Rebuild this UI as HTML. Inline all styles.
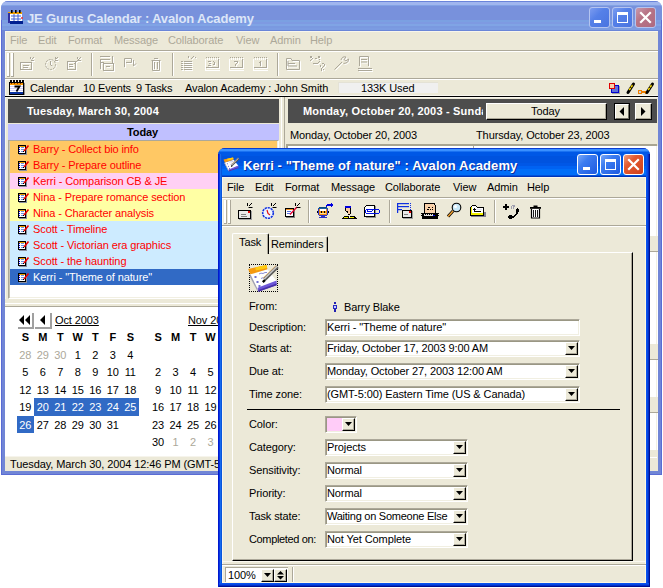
<!DOCTYPE html>
<html><head><meta charset="utf-8">
<style>
*{box-sizing:border-box;margin:0;padding:0}
html,body{width:663px;height:588px;overflow:hidden;background:#fff;position:relative;font-family:"Liberation Sans",sans-serif;font-size:11px;color:#000}
.a{position:absolute}
.t{position:absolute;white-space:pre;line-height:13px;font-size:11px;letter-spacing:-0.1px}
.b{font-weight:bold}
.face{background:#ECE9D8}
</style></head><body>

<!-- ============ MAIN WINDOW (inactive) ============ -->
<div class="a" id="mainwin" style="left:1px;top:1px;width:661px;height:474px;background:#7186D6;border-radius:7px 7px 0 0;overflow:hidden">
  <!-- title gradient -->
  <div class="a" style="left:0;top:0;width:661px;height:30px;background:linear-gradient(to bottom,#6A84DA 0 1px,#A0B6EE 1px 4px,#82A2E4 4px 5px,#7891DC 5px 19px,#7BA0E2 19px 21px,#7E9AE2 21px 23px,#80A4E5 23px 25px,#7A99E0 25px 27px,#7C9CE2 27px 29px,#6A86D8 29px 30px)"></div>
</div>
<div class="a" style="left:1px;top:20px;width:1px;height:455px;background:#5A6CD4"></div>
<div class="a" style="left:661px;top:20px;width:1px;height:455px;background:#5A6CD4"></div>
<div class="a" style="left:1px;top:474px;width:661px;height:1px;background:#5A6CD4"></div>
<!-- main client -->
<div class="a face" style="left:5px;top:31px;width:653px;height:440px"></div>
<div class="a" style="left:5px;top:31px;width:653px;height:1px;background:#F8F6EC"></div>
<div class="a" style="left:5px;top:31px;width:1px;height:440px;background:#F8F6EC"></div>


<div class="t b" style="left:27px;top:10.5px;font-size:13px;line-height:16px;color:#DDE6F8;letter-spacing:-0.15px">JE Gurus Calendar : Avalon Academy</div>
<svg class="a" style="left:7px;top:9px" width="17" height="16"><rect x="1" y="3" width="14" height="2" fill="#F0A000"/><rect x="2" y="5" width="13" height="8" fill="#fff"/><rect x="1" y="4" width="2" height="10" fill="#3030A0"/><path d="M4 7 H14 M4 10 H14 M7 5 V12 M11 5 V12" stroke="#4060D0" stroke-width="1"/><rect x="3" y="12" width="13" height="3" fill="#002090"/><rect x="4" y="1" width="1.6" height="3" fill="#000"/><rect x="8" y="1" width="1.6" height="3" fill="#000"/><rect x="12" y="1" width="1.6" height="3" fill="#000"/><circle cx="15" cy="9" r="1" fill="#F03030"/></svg>
<div class="a" style="left:589px;top:7px;width:21px;height:21px;border-radius:3px;border:1px solid #B4C4F0;background:linear-gradient(135deg,#7C9CF0 0%,#5580E8 40%,#4A74E0 100%)"></div><div class="a" style="left:594px;top:20px;width:7px;height:3px;background:#fff"></div>
<div class="a" style="left:612px;top:7px;width:21px;height:21px;border-radius:3px;border:1px solid #B4C4F0;background:linear-gradient(135deg,#7C9CF0 0%,#5580E8 40%,#4A74E0 100%)"></div><div class="a" style="left:617px;top:12px;width:11px;height:11px;border:1px solid #fff;border-top:3px solid #fff"></div>
<div class="a" style="left:635px;top:7px;width:21px;height:21px;border-radius:3px;border:1px solid #B4C4F0;background:linear-gradient(135deg,#C89AAE 0%,#B87486 40%,#AE6A80 100%)"></div><svg class="a" style="left:635px;top:7px" width="21" height="21"><path d="M6 6 L15 15 M15 6 L6 15" stroke="#fff" stroke-width="2.2" stroke-linecap="square"/></svg>
<!-- menubar -->
<div class="t" style="left:10px;top:34px;color:#ACA899">File</div>
<div class="t" style="left:38px;top:34px;color:#ACA899">Edit</div>
<div class="t" style="left:68px;top:34px;color:#ACA899">Format</div>
<div class="t" style="left:114px;top:34px;color:#ACA899">Message</div>
<div class="t" style="left:168px;top:34px;color:#ACA899">Collaborate</div>
<div class="t" style="left:236px;top:34px;color:#ACA899">View</div>
<div class="t" style="left:270px;top:34px;color:#ACA899">Admin</div>
<div class="t" style="left:310px;top:34px;color:#ACA899">Help</div>
<div class="a" style="left:5px;top:50px;width:653px;height:1px;background:#ACA899"></div>
<div class="a" style="left:5px;top:51px;width:653px;height:1px;background:#fff"></div>
<!-- toolbar -->
<div id="maintb"><svg class="a" style="left:0;top:0" width="663" height="588" shape-rendering="geometricPrecision"><rect x="7" y="53" width="2" height="23" fill="#fff"/><rect x="9" y="53" width="1" height="24" fill="#ACA899"/><rect x="7" y="76" width="3" height="1" fill="#ACA899"/><rect x="11" y="53" width="2" height="23" fill="#fff"/><rect x="13" y="53" width="1" height="24" fill="#ACA899"/><rect x="11" y="76" width="3" height="1" fill="#ACA899"/><rect x="91" y="53" width="1" height="23" fill="#ACA899"/><rect x="92" y="53" width="1" height="23" fill="#fff"/><rect x="172" y="53" width="1" height="23" fill="#ACA899"/><rect x="173" y="53" width="1" height="23" fill="#fff"/><rect x="277" y="53" width="1" height="23" fill="#ACA899"/><rect x="278" y="53" width="1" height="23" fill="#fff"/><g transform="translate(1,1)" stroke="#fff" fill="none"><rect x="20.5" y="62.5" width="11" height="7"/><path d="M23 65.5 H29 M23 67.5 H28"/><path d="M30.5 57 V59 M34 57 L31.5 59.5 M31 60.5 H34"/></g><g stroke="#ACA899" fill="none"><rect x="20.5" y="62.5" width="11" height="7"/><path d="M23 65.5 H29 M23 67.5 H28"/><path d="M30.5 57 V59 M34 57 L31.5 59.5 M31 60.5 H34"/></g><g transform="translate(1,1)" stroke="#fff" fill="none"><circle cx="50.5" cy="64.5" r="5" stroke-dasharray="2 1"/><path d="M50.5 61 V65 L52.5 66"/><path d="M55.5 57 V59 M58 57 L55.5 59.5 M55 60.5 H58"/></g><g stroke="#ACA899" fill="none"><circle cx="50.5" cy="64.5" r="5" stroke-dasharray="2 1"/><path d="M50.5 61 V65 L52.5 66"/><path d="M55.5 57 V59 M58 57 L55.5 59.5 M55 60.5 H58"/></g><g transform="translate(1,1)" stroke="#fff" fill="none"><rect x="67.5" y="61.5" width="8" height="8"/><path d="M69 64.5 H73 M69 66.5 H73 M79 59 L74 64"/><path d="M77.5 57 V59 M81 57 L78.5 59.5 M78 60.5 H81"/></g><g stroke="#ACA899" fill="none"><rect x="67.5" y="61.5" width="8" height="8"/><path d="M69 64.5 H73 M69 66.5 H73 M79 59 L74 64"/><path d="M77.5 57 V59 M81 57 L78.5 59.5 M78 60.5 H81"/></g><g transform="translate(1,1)" stroke="#fff" fill="none"><path d="M100 56.5 H110 M100 59.5 H110 M100 62.5 H104 M112.5 56 V63"/><rect x="103.5" y="63.5" width="10" height="7"/><path d="M106 66.5 H110"/><path d="M100.5 59 V69"/></g><g stroke="#ACA899" fill="none"><path d="M100 56.5 H110 M100 59.5 H110 M100 62.5 H104 M112.5 56 V63"/><rect x="103.5" y="63.5" width="10" height="7"/><path d="M106 66.5 H110"/><path d="M100.5 59 V69"/></g><g transform="translate(1,1)" stroke="#fff" fill="none"><path d="M124.5 67 V58.5 H131.5 V62.5 H126 M133.5 60 V66 L136 63.5"/></g><g stroke="#ACA899" fill="none"><path d="M124.5 67 V58.5 H131.5 V62.5 H126 M133.5 60 V66 L136 63.5"/></g><g transform="translate(1,1)" stroke="#fff" fill="none"><path d="M151.5 60.5 H160.5 M152.5 61 V70.5 H159.5 V61 M154.5 62 V69 M157.5 62 V69 M154 58.5 H158"/></g><g stroke="#ACA899" fill="none"><path d="M151.5 60.5 H160.5 M152.5 61 V70.5 H159.5 V61 M154.5 62 V69 M157.5 62 V69 M154 58.5 H158"/></g><rect x="182" y="62" width="2" height="1" fill="#fff"/><rect x="182" y="64" width="2" height="1" fill="#fff"/><rect x="182" y="66" width="2" height="1" fill="#fff"/><rect x="182" y="68" width="2" height="1" fill="#fff"/><rect x="182" y="70" width="2" height="1" fill="#fff"/><rect x="185" y="62" width="8" height="1" fill="#fff"/><rect x="185" y="64" width="8" height="1" fill="#fff"/><rect x="185" y="66" width="8" height="1" fill="#fff"/><rect x="185" y="68" width="8" height="1" fill="#fff"/><rect x="185" y="70" width="8" height="1" fill="#fff"/><rect x="189" y="57" width="1" height="2" fill="#fff"/><rect x="192" y="59" width="1" height="1" fill="#fff"/><rect x="193" y="58" width="1" height="1" fill="#fff"/><rect x="194" y="57" width="1" height="1" fill="#fff"/><rect x="196" y="58" width="1" height="1" fill="#fff"/><rect x="181" y="61" width="2" height="1" fill="#ACA899"/><rect x="181" y="63" width="2" height="1" fill="#ACA899"/><rect x="181" y="65" width="2" height="1" fill="#ACA899"/><rect x="181" y="67" width="2" height="1" fill="#ACA899"/><rect x="181" y="69" width="2" height="1" fill="#ACA899"/><rect x="184" y="61" width="8" height="1" fill="#ACA899"/><rect x="184" y="63" width="8" height="1" fill="#ACA899"/><rect x="184" y="65" width="8" height="1" fill="#ACA899"/><rect x="184" y="67" width="8" height="1" fill="#ACA899"/><rect x="184" y="69" width="8" height="1" fill="#ACA899"/><rect x="188" y="56" width="1" height="2" fill="#ACA899"/><rect x="191" y="58" width="1" height="1" fill="#ACA899"/><rect x="192" y="57" width="1" height="1" fill="#ACA899"/><rect x="193" y="56" width="1" height="1" fill="#ACA899"/><rect x="195" y="57" width="1" height="1" fill="#ACA899"/><rect x="207" y="59" width="1" height="1" fill="#fff"/><rect x="209" y="59" width="1" height="1" fill="#fff"/><rect x="211" y="59" width="1" height="1" fill="#fff"/><rect x="213" y="59" width="1" height="1" fill="#fff"/><rect x="215" y="59" width="1" height="1" fill="#fff"/><rect x="217" y="59" width="1" height="1" fill="#fff"/><rect x="205" y="59" width="1" height="12" fill="#fff"/><rect x="205" y="70" width="15" height="1" fill="#fff"/><rect x="207" y="58" width="1" height="1" fill="#fff"/><rect x="209" y="58" width="1" height="1" fill="#fff"/><rect x="211" y="58" width="1" height="1" fill="#fff"/><rect x="213" y="58" width="1" height="1" fill="#fff"/><rect x="215" y="58" width="1" height="1" fill="#fff"/><rect x="217" y="58" width="1" height="1" fill="#fff"/><rect x="219" y="58" width="1" height="1" fill="#fff"/><rect x="219" y="60" width="1" height="9" fill="#fff"/><rect x="207" y="68" width="13" height="1" fill="#fff"/><rect x="209" y="62" width="3" height="1" fill="#fff"/><rect x="210" y="64" width="2" height="1" fill="#fff"/><rect x="209" y="66" width="3" height="1" fill="#fff"/><rect x="214" y="62" width="1" height="1" fill="#fff"/><rect x="215" y="63" width="1" height="3" fill="#fff"/><rect x="214" y="65" width="1" height="1" fill="#fff"/><rect x="206" y="57" width="1" height="1" fill="#ACA899"/><rect x="208" y="57" width="1" height="1" fill="#ACA899"/><rect x="210" y="57" width="1" height="1" fill="#ACA899"/><rect x="212" y="57" width="1" height="1" fill="#ACA899"/><rect x="214" y="57" width="1" height="1" fill="#ACA899"/><rect x="216" y="57" width="1" height="1" fill="#ACA899"/><rect x="218" y="57" width="1" height="1" fill="#ACA899"/><rect x="218" y="59" width="1" height="9" fill="#ACA899"/><rect x="206" y="67" width="13" height="1" fill="#ACA899"/><rect x="208" y="61" width="3" height="1" fill="#ACA899"/><rect x="209" y="63" width="2" height="1" fill="#ACA899"/><rect x="208" y="65" width="3" height="1" fill="#ACA899"/><rect x="213" y="61" width="1" height="1" fill="#ACA899"/><rect x="214" y="62" width="1" height="3" fill="#ACA899"/><rect x="213" y="64" width="1" height="1" fill="#ACA899"/><rect x="231" y="59" width="1" height="1" fill="#fff"/><rect x="233" y="59" width="1" height="1" fill="#fff"/><rect x="235" y="59" width="1" height="1" fill="#fff"/><rect x="237" y="59" width="1" height="1" fill="#fff"/><rect x="239" y="59" width="1" height="1" fill="#fff"/><rect x="241" y="59" width="1" height="1" fill="#fff"/><rect x="229" y="59" width="1" height="12" fill="#fff"/><rect x="229" y="70" width="15" height="1" fill="#fff"/><rect x="231" y="58" width="1" height="1" fill="#fff"/><rect x="233" y="58" width="1" height="1" fill="#fff"/><rect x="235" y="58" width="1" height="1" fill="#fff"/><rect x="237" y="58" width="1" height="1" fill="#fff"/><rect x="239" y="58" width="1" height="1" fill="#fff"/><rect x="241" y="58" width="1" height="1" fill="#fff"/><rect x="243" y="58" width="1" height="1" fill="#fff"/><rect x="243" y="60" width="1" height="9" fill="#fff"/><rect x="231" y="68" width="13" height="1" fill="#fff"/><rect x="235" y="62" width="4" height="1" fill="#fff"/><rect x="238" y="63" width="1" height="1" fill="#fff"/><rect x="237" y="64" width="1" height="1" fill="#fff"/><rect x="236" y="65" width="1" height="2" fill="#fff"/><rect x="230" y="57" width="1" height="1" fill="#ACA899"/><rect x="232" y="57" width="1" height="1" fill="#ACA899"/><rect x="234" y="57" width="1" height="1" fill="#ACA899"/><rect x="236" y="57" width="1" height="1" fill="#ACA899"/><rect x="238" y="57" width="1" height="1" fill="#ACA899"/><rect x="240" y="57" width="1" height="1" fill="#ACA899"/><rect x="242" y="57" width="1" height="1" fill="#ACA899"/><rect x="242" y="59" width="1" height="9" fill="#ACA899"/><rect x="230" y="67" width="13" height="1" fill="#ACA899"/><rect x="234" y="61" width="4" height="1" fill="#ACA899"/><rect x="237" y="62" width="1" height="1" fill="#ACA899"/><rect x="236" y="63" width="1" height="1" fill="#ACA899"/><rect x="235" y="64" width="1" height="2" fill="#ACA899"/><rect x="255" y="59" width="1" height="1" fill="#fff"/><rect x="257" y="59" width="1" height="1" fill="#fff"/><rect x="259" y="59" width="1" height="1" fill="#fff"/><rect x="261" y="59" width="1" height="1" fill="#fff"/><rect x="263" y="59" width="1" height="1" fill="#fff"/><rect x="265" y="59" width="1" height="1" fill="#fff"/><rect x="253" y="59" width="1" height="12" fill="#fff"/><rect x="253" y="70" width="15" height="1" fill="#fff"/><rect x="255" y="58" width="1" height="1" fill="#fff"/><rect x="257" y="58" width="1" height="1" fill="#fff"/><rect x="259" y="58" width="1" height="1" fill="#fff"/><rect x="261" y="58" width="1" height="1" fill="#fff"/><rect x="263" y="58" width="1" height="1" fill="#fff"/><rect x="265" y="58" width="1" height="1" fill="#fff"/><rect x="267" y="58" width="1" height="1" fill="#fff"/><rect x="267" y="60" width="1" height="9" fill="#fff"/><rect x="255" y="68" width="13" height="1" fill="#fff"/><rect x="261" y="62" width="1" height="5" fill="#fff"/><rect x="260" y="63" width="1" height="1" fill="#fff"/><rect x="254" y="57" width="1" height="1" fill="#ACA899"/><rect x="256" y="57" width="1" height="1" fill="#ACA899"/><rect x="258" y="57" width="1" height="1" fill="#ACA899"/><rect x="260" y="57" width="1" height="1" fill="#ACA899"/><rect x="262" y="57" width="1" height="1" fill="#ACA899"/><rect x="264" y="57" width="1" height="1" fill="#ACA899"/><rect x="266" y="57" width="1" height="1" fill="#ACA899"/><rect x="266" y="59" width="1" height="9" fill="#ACA899"/><rect x="254" y="67" width="13" height="1" fill="#ACA899"/><rect x="260" y="61" width="1" height="5" fill="#ACA899"/><rect x="259" y="62" width="1" height="1" fill="#ACA899"/><g transform="translate(1,1)" stroke="#fff" fill="none"><path d="M286.5 58.5 H291 L292 60.5 H299.5 V69.5 H286.5 Z M288 63.5 H295 M288 61 V66 H297"/></g><g stroke="#ACA899" fill="none"><path d="M286.5 58.5 H291 L292 60.5 H299.5 V69.5 H286.5 Z M288 63.5 H295 M288 61 V66 H297"/></g><rect x="311" y="57" width="2" height="2" fill="#fff"/><rect x="313" y="59" width="1" height="1" fill="#fff"/><rect x="312" y="60" width="1" height="1" fill="#fff"/><rect x="311" y="61" width="1" height="1" fill="#fff"/><rect x="316" y="59" width="2" height="1" fill="#fff"/><rect x="319" y="57" width="2" height="2" fill="#fff"/><rect x="320" y="60" width="1" height="1" fill="#fff"/><rect x="314" y="64" width="5" height="1" fill="#fff"/><rect x="319" y="63" width="1" height="1" fill="#fff"/><rect x="320" y="62" width="1" height="1" fill="#fff"/><rect x="323" y="64" width="2" height="1" fill="#fff"/><rect x="321" y="66" width="1" height="2" fill="#fff"/><rect x="325" y="65" width="1" height="2" fill="#fff"/><rect x="324" y="67" width="1" height="1" fill="#fff"/><rect x="323" y="68" width="1" height="1" fill="#fff"/><rect x="322" y="69" width="1" height="3" fill="#fff"/><rect x="324" y="70" width="1" height="1" fill="#fff"/><rect x="310" y="56" width="2" height="2" fill="#ACA899"/><rect x="312" y="58" width="1" height="1" fill="#ACA899"/><rect x="311" y="59" width="1" height="1" fill="#ACA899"/><rect x="310" y="60" width="1" height="1" fill="#ACA899"/><rect x="315" y="58" width="2" height="1" fill="#ACA899"/><rect x="318" y="56" width="2" height="2" fill="#ACA899"/><rect x="319" y="59" width="1" height="1" fill="#ACA899"/><rect x="313" y="63" width="5" height="1" fill="#ACA899"/><rect x="318" y="62" width="1" height="1" fill="#ACA899"/><rect x="319" y="61" width="1" height="1" fill="#ACA899"/><rect x="322" y="63" width="2" height="1" fill="#ACA899"/><rect x="320" y="65" width="1" height="2" fill="#ACA899"/><rect x="324" y="64" width="1" height="2" fill="#ACA899"/><rect x="323" y="66" width="1" height="1" fill="#ACA899"/><rect x="322" y="67" width="1" height="1" fill="#ACA899"/><rect x="321" y="68" width="1" height="3" fill="#ACA899"/><rect x="323" y="69" width="1" height="1" fill="#ACA899"/><g transform="translate(1,1)" stroke="#fff" fill="none"><path d="M334.5 69.5 L342 62 M341 60 Q342 56 346 57 L344 59.5 L346 61 L348.5 59 Q349 63 343.5 63.5"/></g><g stroke="#ACA899" fill="none"><path d="M334.5 69.5 L342 62 M341 60 Q342 56 346 57 L344 59.5 L346 61 L348.5 59 Q349 63 343.5 63.5"/></g><g transform="translate(1,1)" stroke="#fff" fill="none"><path d="M359.5 66 V56.5 H368.5 V66 M361 59.5 H367 M361 62 H367 M358 68.5 H372 M358 70.5 H372" /></g><g stroke="#ACA899" fill="none"><path d="M359.5 66 V56.5 H368.5 V66 M361 59.5 H367 M361 62 H367 M358 68.5 H372 M358 70.5 H372" /></g></svg></div>
<div class="a" style="left:5px;top:78px;width:653px;height:1px;background:#ACA899"></div>
<div class="a" style="left:5px;top:79px;width:653px;height:1px;background:#fff"></div>
<!-- status row -->
<svg class="a" style="left:9px;top:80px" width="17" height="17" shape-rendering="crispEdges"><rect x="2" y="3" width="14" height="13" fill="#909090"/><rect x="0" y="2" width="15" height="13" fill="#000"/><rect x="1" y="3" width="13" height="2" fill="#F89800"/><rect x="2" y="3" width="1" height="1" fill="#803000"/><rect x="5" y="3" width="1" height="1" fill="#803000"/><rect x="8" y="3" width="1" height="1" fill="#803000"/><rect x="11" y="3" width="1" height="1" fill="#803000"/><rect x="1" y="5" width="13" height="7" fill="#fff"/><rect x="1" y="6" width="13" height="1" fill="#D0D0F8"/><rect x="1" y="8" width="13" height="1" fill="#D0D0F8"/><rect x="1" y="10" width="13" height="1" fill="#D0D0F8"/><rect x="1" y="12" width="13" height="2" fill="#0830A0"/><rect x="1" y="0" width="2" height="2" fill="#000"/><rect x="4" y="0" width="2" height="2" fill="#000"/><rect x="7" y="0" width="2" height="2" fill="#000"/><rect x="10" y="0" width="2" height="2" fill="#000"/><rect x="13" y="0" width="2" height="2" fill="#000"/><rect x="3" y="1" width="1" height="1" fill="#fff"/><rect x="6" y="1" width="1" height="1" fill="#fff"/><rect x="9" y="1" width="1" height="1" fill="#fff"/><rect x="12" y="1" width="1" height="1" fill="#fff"/><rect x="15" y="1" width="1" height="1" fill="#fff"/><path d="M5.5 6.5 H10.5 L7.5 11.5" stroke="#000" stroke-width="1.8" fill="none" shape-rendering="geometricPrecision"/></svg>
<div class="t" style="left:30px;top:82px">Calendar</div>
<div class="t" style="left:83px;top:82px">10 Events</div>
<div class="t" style="left:136px;top:82px">9 Tasks</div>
<div class="t" style="left:185px;top:82px">Avalon Academy : John Smith</div>
<div class="a" style="left:338px;top:82px;width:100px;height:11px;background:#F0F0F0;border-top:1px solid #E4E2D6;border-left:1px solid #E4E2D6"></div>
<div class="t" style="left:361px;top:82px">133K Used</div>
<svg class="a" style="left:604px;top:78px" width="56" height="18" shape-rendering="crispEdges"><rect x="8" y="8" width="8" height="8" fill="#A0A0A0"/><rect x="7" y="7" width="8" height="8" fill="#0000D0"/><rect x="8" y="8" width="6" height="6" fill="#6070D8"/><rect x="5" y="5" width="6" height="6" fill="#E00000"/><rect x="6" y="6" width="4" height="4" fill="#F8D0A8"/><g shape-rendering="geometricPrecision"><path d="M24 14.5 L29.5 6" stroke="#000" stroke-width="3" stroke-linecap="round"/><path d="M25.200000000000045 12 L29 6.5" stroke="#F8D800" stroke-width="1.5" stroke-dasharray="2.5 0.8"/></g><rect x="34" y="12" width="4" height="4" fill="#F08000"/><rect x="35" y="13" width="2" height="2" fill="#C8D0E0"/><rect x="38" y="13" width="6" height="2" fill="#F08000"/><rect x="41" y="15" width="2" height="1" fill="#F08000"/><g shape-rendering="geometricPrecision"><path d="M43 14.5 L48.5 6" stroke="#000" stroke-width="3" stroke-linecap="round"/><path d="M44.200000000000045 12 L48 6.5" stroke="#F8D800" stroke-width="1.5" stroke-dasharray="2.5 0.8"/></g></svg>
<div class="a" style="left:5px;top:95px;width:653px;height:1px;background:#F8F6EE"></div><div class="a" style="left:5px;top:96px;width:653px;height:1px;background:#000"></div><div class="a" style="left:5px;top:97px;width:653px;height:1px;background:#F8F6EE"></div>

<!-- left panel -->
<div class="a" style="left:8px;top:99px;width:271px;height:24px;background:#4D4D4D"></div>
<div class="t b" style="left:27px;top:105px;color:#fff;letter-spacing:0.2px">Tuesday, March 30, 2004</div>
<div class="a" style="left:8px;top:124px;width:271px;height:16px;background:#C0C0FF"></div>
<div class="t b" style="left:127px;top:126px">Today</div>
<!-- list frame -->
<div class="a" style="left:8px;top:140px;width:271px;height:159px;background:#fff;border-left:1px solid #ACA899;border-top:1px solid #ACA899;border-bottom:1px solid #fff;border-right:1px solid #fff;box-shadow:inset 1px 0 0 #C8C5B4,inset 0 -1px 0 #F1EFE2,inset -1px 0 0 #F1EFE2"></div>
<div class="a" style="left:10px;top:141px;width:267px;height:16px;background:#FFC864"></div>
<svg class="a" style="left:17px;top:144px" width="13" height="12" shape-rendering="crispEdges"><rect x="2" y="3" width="8" height="8" fill="#8A8FA0"/><rect x="1" y="1" width="8" height="9" fill="#000"/><rect x="2" y="2" width="6" height="7" fill="#fff"/><rect x="2" y="2" width="6" height="1" fill="#F0A000"/><rect x="2" y="3" width="1" height="1" fill="#0000E0"/><rect x="2" y="5" width="1" height="1" fill="#0000E0"/><rect x="2" y="7" width="1" height="1" fill="#0000E0"/><rect x="4" y="3" width="3" height="1" fill="#6A90E0"/><rect x="4" y="5" width="3" height="1" fill="#6A90E0"/><rect x="4" y="7" width="2" height="1" fill="#6A90E0"/><path d="M11.5 1.5 L7 7" stroke="#F00000" stroke-width="1.6" shape-rendering="geometricPrecision"/><rect x="6" y="7" width="1" height="1" fill="#000"/></svg>
<div class="t" style="left:33px;top:143px;color:#FF0000">Barry - Collect bio info</div>
<div class="a" style="left:10px;top:157px;width:267px;height:16px;background:#FFC864"></div>
<svg class="a" style="left:17px;top:160px" width="13" height="12" shape-rendering="crispEdges"><rect x="2" y="3" width="8" height="8" fill="#8A8FA0"/><rect x="1" y="1" width="8" height="9" fill="#000"/><rect x="2" y="2" width="6" height="7" fill="#fff"/><rect x="2" y="2" width="6" height="1" fill="#F0A000"/><rect x="2" y="3" width="1" height="1" fill="#0000E0"/><rect x="2" y="5" width="1" height="1" fill="#0000E0"/><rect x="2" y="7" width="1" height="1" fill="#0000E0"/><rect x="4" y="3" width="3" height="1" fill="#6A90E0"/><rect x="4" y="5" width="3" height="1" fill="#6A90E0"/><rect x="4" y="7" width="2" height="1" fill="#6A90E0"/><path d="M11.5 1.5 L7 7" stroke="#F00000" stroke-width="1.6" shape-rendering="geometricPrecision"/><rect x="6" y="7" width="1" height="1" fill="#000"/></svg>
<div class="t" style="left:33px;top:159px;color:#FF0000">Barry - Prepare outline</div>
<div class="a" style="left:10px;top:173px;width:267px;height:16px;background:#FFD0F4"></div>
<svg class="a" style="left:17px;top:176px" width="13" height="12" shape-rendering="crispEdges"><rect x="2" y="3" width="8" height="8" fill="#8A8FA0"/><rect x="1" y="1" width="8" height="9" fill="#000"/><rect x="2" y="2" width="6" height="7" fill="#fff"/><rect x="2" y="2" width="6" height="1" fill="#F0A000"/><rect x="2" y="3" width="1" height="1" fill="#0000E0"/><rect x="2" y="5" width="1" height="1" fill="#0000E0"/><rect x="2" y="7" width="1" height="1" fill="#0000E0"/><rect x="4" y="3" width="3" height="1" fill="#6A90E0"/><rect x="4" y="5" width="3" height="1" fill="#6A90E0"/><rect x="4" y="7" width="2" height="1" fill="#6A90E0"/><path d="M11.5 1.5 L7 7" stroke="#F00000" stroke-width="1.6" shape-rendering="geometricPrecision"/><rect x="6" y="7" width="1" height="1" fill="#000"/></svg>
<div class="t" style="left:33px;top:175px;color:#FF0000">Kerri - Comparison CB &amp; JE</div>
<div class="a" style="left:10px;top:189px;width:267px;height:16px;background:#FFFFA4"></div>
<svg class="a" style="left:17px;top:192px" width="13" height="12" shape-rendering="crispEdges"><rect x="2" y="3" width="8" height="8" fill="#8A8FA0"/><rect x="1" y="1" width="8" height="9" fill="#000"/><rect x="2" y="2" width="6" height="7" fill="#fff"/><rect x="2" y="2" width="6" height="1" fill="#F0A000"/><rect x="2" y="3" width="1" height="1" fill="#0000E0"/><rect x="2" y="5" width="1" height="1" fill="#0000E0"/><rect x="2" y="7" width="1" height="1" fill="#0000E0"/><rect x="4" y="3" width="3" height="1" fill="#6A90E0"/><rect x="4" y="5" width="3" height="1" fill="#6A90E0"/><rect x="4" y="7" width="2" height="1" fill="#6A90E0"/><path d="M11.5 1.5 L7 7" stroke="#F00000" stroke-width="1.6" shape-rendering="geometricPrecision"/><rect x="6" y="7" width="1" height="1" fill="#000"/></svg>
<div class="t" style="left:33px;top:191px;color:#FF0000">Nina - Prepare romance section</div>
<div class="a" style="left:10px;top:205px;width:267px;height:16px;background:#FFFFA4"></div>
<svg class="a" style="left:17px;top:208px" width="13" height="12" shape-rendering="crispEdges"><rect x="2" y="3" width="8" height="8" fill="#8A8FA0"/><rect x="1" y="1" width="8" height="9" fill="#000"/><rect x="2" y="2" width="6" height="7" fill="#fff"/><rect x="2" y="2" width="6" height="1" fill="#F0A000"/><rect x="2" y="3" width="1" height="1" fill="#0000E0"/><rect x="2" y="5" width="1" height="1" fill="#0000E0"/><rect x="2" y="7" width="1" height="1" fill="#0000E0"/><rect x="4" y="3" width="3" height="1" fill="#6A90E0"/><rect x="4" y="5" width="3" height="1" fill="#6A90E0"/><rect x="4" y="7" width="2" height="1" fill="#6A90E0"/><path d="M11.5 1.5 L7 7" stroke="#F00000" stroke-width="1.6" shape-rendering="geometricPrecision"/><rect x="6" y="7" width="1" height="1" fill="#000"/></svg>
<div class="t" style="left:33px;top:207px;color:#FF0000">Nina - Character analysis</div>
<div class="a" style="left:10px;top:221px;width:267px;height:16px;background:#CDEBFF"></div>
<svg class="a" style="left:17px;top:224px" width="13" height="12" shape-rendering="crispEdges"><rect x="2" y="3" width="8" height="8" fill="#8A8FA0"/><rect x="1" y="1" width="8" height="9" fill="#000"/><rect x="2" y="2" width="6" height="7" fill="#fff"/><rect x="2" y="2" width="6" height="1" fill="#F0A000"/><rect x="2" y="3" width="1" height="1" fill="#0000E0"/><rect x="2" y="5" width="1" height="1" fill="#0000E0"/><rect x="2" y="7" width="1" height="1" fill="#0000E0"/><rect x="4" y="3" width="3" height="1" fill="#6A90E0"/><rect x="4" y="5" width="3" height="1" fill="#6A90E0"/><rect x="4" y="7" width="2" height="1" fill="#6A90E0"/><path d="M11.5 1.5 L7 7" stroke="#F00000" stroke-width="1.6" shape-rendering="geometricPrecision"/><rect x="6" y="7" width="1" height="1" fill="#000"/></svg>
<div class="t" style="left:33px;top:223px;color:#FF0000">Scott - Timeline</div>
<div class="a" style="left:10px;top:237px;width:267px;height:16px;background:#CDEBFF"></div>
<svg class="a" style="left:17px;top:240px" width="13" height="12" shape-rendering="crispEdges"><rect x="2" y="3" width="8" height="8" fill="#8A8FA0"/><rect x="1" y="1" width="8" height="9" fill="#000"/><rect x="2" y="2" width="6" height="7" fill="#fff"/><rect x="2" y="2" width="6" height="1" fill="#F0A000"/><rect x="2" y="3" width="1" height="1" fill="#0000E0"/><rect x="2" y="5" width="1" height="1" fill="#0000E0"/><rect x="2" y="7" width="1" height="1" fill="#0000E0"/><rect x="4" y="3" width="3" height="1" fill="#6A90E0"/><rect x="4" y="5" width="3" height="1" fill="#6A90E0"/><rect x="4" y="7" width="2" height="1" fill="#6A90E0"/><path d="M11.5 1.5 L7 7" stroke="#F00000" stroke-width="1.6" shape-rendering="geometricPrecision"/><rect x="6" y="7" width="1" height="1" fill="#000"/></svg>
<div class="t" style="left:33px;top:239px;color:#FF0000">Scott - Victorian era graphics</div>
<div class="a" style="left:10px;top:253px;width:267px;height:16px;background:#CDEBFF"></div>
<svg class="a" style="left:17px;top:256px" width="13" height="12" shape-rendering="crispEdges"><rect x="2" y="3" width="8" height="8" fill="#8A8FA0"/><rect x="1" y="1" width="8" height="9" fill="#000"/><rect x="2" y="2" width="6" height="7" fill="#fff"/><rect x="2" y="2" width="6" height="1" fill="#F0A000"/><rect x="2" y="3" width="1" height="1" fill="#0000E0"/><rect x="2" y="5" width="1" height="1" fill="#0000E0"/><rect x="2" y="7" width="1" height="1" fill="#0000E0"/><rect x="4" y="3" width="3" height="1" fill="#6A90E0"/><rect x="4" y="5" width="3" height="1" fill="#6A90E0"/><rect x="4" y="7" width="2" height="1" fill="#6A90E0"/><path d="M11.5 1.5 L7 7" stroke="#F00000" stroke-width="1.6" shape-rendering="geometricPrecision"/><rect x="6" y="7" width="1" height="1" fill="#000"/></svg>
<div class="t" style="left:33px;top:255px;color:#FF0000">Scott - the haunting</div>
<div class="a" style="left:10px;top:269px;width:267px;height:16px;background:#316AC5"></div>
<svg class="a" style="left:17px;top:272px" width="13" height="12" shape-rendering="crispEdges"><rect x="2" y="3" width="8" height="8" fill="#8A8FA0"/><rect x="1" y="1" width="8" height="9" fill="#000"/><rect x="2" y="2" width="6" height="7" fill="#fff"/><rect x="2" y="2" width="6" height="1" fill="#F0A000"/><rect x="2" y="3" width="1" height="1" fill="#0000E0"/><rect x="2" y="5" width="1" height="1" fill="#0000E0"/><rect x="2" y="7" width="1" height="1" fill="#0000E0"/><rect x="4" y="3" width="3" height="1" fill="#6A90E0"/><rect x="4" y="5" width="3" height="1" fill="#6A90E0"/><rect x="4" y="7" width="2" height="1" fill="#6A90E0"/><path d="M11.5 1.5 L7 7" stroke="#F00000" stroke-width="1.6" shape-rendering="geometricPrecision"/><rect x="6" y="7" width="1" height="1" fill="#000"/></svg>
<div class="t" style="left:33px;top:271px;color:#fff">Kerri - "Theme of nature"</div>
<!-- splitter -->
<div class="a" style="left:279px;top:97px;width:9px;height:209px;background:#ECE9D8"></div>
<div class="a" style="left:281px;top:97px;width:1px;height:209px;background:#fff"></div>
<div class="a" style="left:284px;top:97px;width:1px;height:209px;background:#ACA899"></div>
<div class="a" style="left:5px;top:299px;width:283px;height:8px;background:#ECE9D8"></div>
<div class="a" style="left:5px;top:303px;width:653px;height:1px;background:#fff"></div>
<div class="a" style="left:5px;top:306px;width:653px;height:1px;background:#ACA899"></div>

<!-- right panel -->
<div class="a" style="left:288px;top:99px;width:369px;height:24px;background:#4D4D4D"></div>
<div class="a" style="left:288px;top:99px;width:195px;height:24px;overflow:hidden"><div class="t b" style="left:15px;top:6px;color:#fff;letter-spacing:0.2px">Monday, October 20, 2003 - Sunday, October 26, 2003</div></div>
<div class="a" style="left:486px;top:103px;width:121px;height:17px;background:#ECE9D8;border-top:1px solid #fff;border-left:1px solid #fff;border-right:1px solid #000;border-bottom:1px solid #000;box-shadow:inset -1px -1px 0 #ACA899"></div>
<div class="t" style="left:531px;top:105px">Today</div>
<div class="a" style="left:614px;top:103px;width:16px;height:17px;background:#000"></div>
<div class="a" style="left:615px;top:104px;width:14px;height:15px;background:#ECE9D8;border-top:1px solid #fff;border-left:1px solid #fff;border-right:1px solid #716F64;border-bottom:1px solid #716F64"></div>
<svg class="a" style="left:618px;top:107px" width="8" height="10"><path d="M6 0 L6 9 L1.5 4.5 Z" fill="#000"/></svg>
<div class="a" style="left:635px;top:103px;width:17px;height:17px;background:#ECE9D8;border-top:1px solid #fff;border-left:1px solid #fff;border-right:1px solid #000;border-bottom:1px solid #000;box-shadow:inset -1px -1px 0 #ACA899"></div>
<svg class="a" style="left:640px;top:107px" width="8" height="10"><path d="M1 0 L1 9 L5.5 4.5 Z" fill="#000"/></svg>
<div class="t" style="left:290px;top:129px">Monday, October 20, 2003</div>
<div class="t" style="left:476px;top:129px">Thursday, October 23, 2003</div>
<div class="a" style="left:286px;top:144px;width:371px;height:2px;background:#A8A592"></div>
<div class="a" style="left:286px;top:144px;width:2px;height:326px;background:#A8A592"></div>
<div class="a" style="left:288px;top:146px;width:369px;height:324px;background:#fff"></div>


<!-- mini calendar -->
<div class="a" style="left:5px;top:307px;width:653px;height:149px;background:#fff"></div>
<div class="a" style="left:18px;top:313px;width:16px;height:16px;border-right:2px solid #A0A0A0;border-bottom:2px solid #A0A0A0"></div>
<svg class="a" style="left:18px;top:315px" width="14" height="11"><path d="M1 5 L6 0 L6 10 Z M7 5 L12 0 L12 10 Z" fill="#000"/></svg>
<div class="a" style="left:35px;top:313px;width:17px;height:16px;border-right:2px solid #A0A0A0;border-bottom:2px solid #A0A0A0"></div>
<svg class="a" style="left:39px;top:315px" width="8" height="11"><path d="M1 5 L6 0 L6 10 Z" fill="#000"/></svg>
<div class="t" style="left:55px;top:314px;text-decoration:underline">Oct 2003</div>
<div class="t" style="left:188px;top:314px;text-decoration:underline">Nov 2003</div>
<div class="t b" style="left:16.5px;top:328px;width:17.5px;text-align:center;line-height:17px;padding-top:1px;color:#000">S</div>
<div class="t b" style="left:34.0px;top:328px;width:17.5px;text-align:center;line-height:17px;padding-top:1px;color:#000">M</div>
<div class="t b" style="left:51.5px;top:328px;width:17.5px;text-align:center;line-height:17px;padding-top:1px;color:#000">T</div>
<div class="t b" style="left:69.0px;top:328px;width:17.5px;text-align:center;line-height:17px;padding-top:1px;color:#000">W</div>
<div class="t b" style="left:86.5px;top:328px;width:17.5px;text-align:center;line-height:17px;padding-top:1px;color:#000">T</div>
<div class="t b" style="left:104.0px;top:328px;width:17.5px;text-align:center;line-height:17px;padding-top:1px;color:#000">F</div>
<div class="t b" style="left:121.5px;top:328px;width:17.5px;text-align:center;line-height:17px;padding-top:1px;color:#000">S</div>
<div class="t" style="left:16.5px;top:345.5px;width:17.5px;text-align:center;line-height:17px;padding-top:1px;color:#ACA899">28</div>
<div class="t" style="left:34.0px;top:345.5px;width:17.5px;text-align:center;line-height:17px;padding-top:1px;color:#ACA899">29</div>
<div class="t" style="left:51.5px;top:345.5px;width:17.5px;text-align:center;line-height:17px;padding-top:1px;color:#ACA899">30</div>
<div class="t" style="left:69.0px;top:345.5px;width:17.5px;text-align:center;line-height:17px;padding-top:1px;color:#000">1</div>
<div class="t" style="left:86.5px;top:345.5px;width:17.5px;text-align:center;line-height:17px;padding-top:1px;color:#000">2</div>
<div class="t" style="left:104.0px;top:345.5px;width:17.5px;text-align:center;line-height:17px;padding-top:1px;color:#000">3</div>
<div class="t" style="left:121.5px;top:345.5px;width:17.5px;text-align:center;line-height:17px;padding-top:1px;color:#000">4</div>
<div class="t" style="left:16.5px;top:363.0px;width:17.5px;text-align:center;line-height:17px;padding-top:1px;color:#000">5</div>
<div class="t" style="left:34.0px;top:363.0px;width:17.5px;text-align:center;line-height:17px;padding-top:1px;color:#000">6</div>
<div class="t" style="left:51.5px;top:363.0px;width:17.5px;text-align:center;line-height:17px;padding-top:1px;color:#000">7</div>
<div class="t" style="left:69.0px;top:363.0px;width:17.5px;text-align:center;line-height:17px;padding-top:1px;color:#000">8</div>
<div class="t" style="left:86.5px;top:363.0px;width:17.5px;text-align:center;line-height:17px;padding-top:1px;color:#000">9</div>
<div class="t" style="left:104.0px;top:363.0px;width:17.5px;text-align:center;line-height:17px;padding-top:1px;color:#000">10</div>
<div class="t" style="left:121.5px;top:363.0px;width:17.5px;text-align:center;line-height:17px;padding-top:1px;color:#000">11</div>
<div class="t" style="left:16.5px;top:380.5px;width:17.5px;text-align:center;line-height:17px;padding-top:1px;color:#000">12</div>
<div class="t" style="left:34.0px;top:380.5px;width:17.5px;text-align:center;line-height:17px;padding-top:1px;color:#000">13</div>
<div class="t" style="left:51.5px;top:380.5px;width:17.5px;text-align:center;line-height:17px;padding-top:1px;color:#000">14</div>
<div class="t" style="left:69.0px;top:380.5px;width:17.5px;text-align:center;line-height:17px;padding-top:1px;color:#000">15</div>
<div class="t" style="left:86.5px;top:380.5px;width:17.5px;text-align:center;line-height:17px;padding-top:1px;color:#000">16</div>
<div class="t" style="left:104.0px;top:380.5px;width:17.5px;text-align:center;line-height:17px;padding-top:1px;color:#000">17</div>
<div class="t" style="left:121.5px;top:380.5px;width:17.5px;text-align:center;line-height:17px;padding-top:1px;color:#000">18</div>
<div class="t" style="left:16.5px;top:398.0px;width:17.5px;text-align:center;line-height:17px;padding-top:1px;color:#000">19</div>
<div class="a" style="left:34.0px;top:398.0px;width:17.5px;height:17.5px;background:#316AC5"></div><div class="t" style="left:34.0px;top:398.0px;width:17.5px;text-align:center;line-height:17px;padding-top:1px;color:#fff">20</div>
<div class="a" style="left:51.5px;top:398.0px;width:17.5px;height:17.5px;background:#316AC5"></div><div class="t" style="left:51.5px;top:398.0px;width:17.5px;text-align:center;line-height:17px;padding-top:1px;color:#fff">21</div>
<div class="a" style="left:69.0px;top:398.0px;width:17.5px;height:17.5px;background:#316AC5"></div><div class="t" style="left:69.0px;top:398.0px;width:17.5px;text-align:center;line-height:17px;padding-top:1px;color:#fff">22</div>
<div class="a" style="left:86.5px;top:398.0px;width:17.5px;height:17.5px;background:#316AC5"></div><div class="t" style="left:86.5px;top:398.0px;width:17.5px;text-align:center;line-height:17px;padding-top:1px;color:#fff">23</div>
<div class="a" style="left:104.0px;top:398.0px;width:17.5px;height:17.5px;background:#316AC5"></div><div class="t" style="left:104.0px;top:398.0px;width:17.5px;text-align:center;line-height:17px;padding-top:1px;color:#fff">24</div>
<div class="a" style="left:121.5px;top:398.0px;width:17.5px;height:17.5px;background:#316AC5"></div><div class="t" style="left:121.5px;top:398.0px;width:17.5px;text-align:center;line-height:17px;padding-top:1px;color:#fff">25</div>
<div class="a" style="left:16.5px;top:415.5px;width:17.5px;height:17.5px;background:#316AC5"></div><div class="t" style="left:16.5px;top:415.5px;width:17.5px;text-align:center;line-height:17px;padding-top:1px;color:#fff">26</div>
<div class="t" style="left:34.0px;top:415.5px;width:17.5px;text-align:center;line-height:17px;padding-top:1px;color:#000">27</div>
<div class="t" style="left:51.5px;top:415.5px;width:17.5px;text-align:center;line-height:17px;padding-top:1px;color:#000">28</div>
<div class="t" style="left:69.0px;top:415.5px;width:17.5px;text-align:center;line-height:17px;padding-top:1px;color:#000">29</div>
<div class="t" style="left:86.5px;top:415.5px;width:17.5px;text-align:center;line-height:17px;padding-top:1px;color:#000">30</div>
<div class="t" style="left:104.0px;top:415.5px;width:17.5px;text-align:center;line-height:17px;padding-top:1px;color:#000">31</div>
<div class="t b" style="left:149.25px;top:328px;width:17.5px;text-align:center;line-height:17px;padding-top:1px;color:#000">S</div>
<div class="t b" style="left:166.75px;top:328px;width:17.5px;text-align:center;line-height:17px;padding-top:1px;color:#000">M</div>
<div class="t b" style="left:184.25px;top:328px;width:17.5px;text-align:center;line-height:17px;padding-top:1px;color:#000">T</div>
<div class="t b" style="left:201.75px;top:328px;width:17.5px;text-align:center;line-height:17px;padding-top:1px;color:#000">W</div>
<div class="t b" style="left:219.25px;top:328px;width:17.5px;text-align:center;line-height:17px;padding-top:1px;color:#000">T</div>
<div class="t b" style="left:236.75px;top:328px;width:17.5px;text-align:center;line-height:17px;padding-top:1px;color:#000">F</div>
<div class="t b" style="left:254.25px;top:328px;width:17.5px;text-align:center;line-height:17px;padding-top:1px;color:#000">S</div>
<div class="t" style="left:149.25px;top:363.0px;width:17.5px;text-align:center;line-height:17px;padding-top:1px;color:#000">2</div>
<div class="t" style="left:166.75px;top:363.0px;width:17.5px;text-align:center;line-height:17px;padding-top:1px;color:#000">3</div>
<div class="t" style="left:184.25px;top:363.0px;width:17.5px;text-align:center;line-height:17px;padding-top:1px;color:#000">4</div>
<div class="t" style="left:201.75px;top:363.0px;width:17.5px;text-align:center;line-height:17px;padding-top:1px;color:#000">5</div>
<div class="t" style="left:219.25px;top:363.0px;width:17.5px;text-align:center;line-height:17px;padding-top:1px;color:#000">6</div>
<div class="t" style="left:236.75px;top:363.0px;width:17.5px;text-align:center;line-height:17px;padding-top:1px;color:#000">7</div>
<div class="t" style="left:254.25px;top:363.0px;width:17.5px;text-align:center;line-height:17px;padding-top:1px;color:#000">8</div>
<div class="t" style="left:149.25px;top:380.5px;width:17.5px;text-align:center;line-height:17px;padding-top:1px;color:#000">9</div>
<div class="t" style="left:166.75px;top:380.5px;width:17.5px;text-align:center;line-height:17px;padding-top:1px;color:#000">10</div>
<div class="t" style="left:184.25px;top:380.5px;width:17.5px;text-align:center;line-height:17px;padding-top:1px;color:#000">11</div>
<div class="t" style="left:201.75px;top:380.5px;width:17.5px;text-align:center;line-height:17px;padding-top:1px;color:#000">12</div>
<div class="t" style="left:219.25px;top:380.5px;width:17.5px;text-align:center;line-height:17px;padding-top:1px;color:#000">13</div>
<div class="t" style="left:236.75px;top:380.5px;width:17.5px;text-align:center;line-height:17px;padding-top:1px;color:#000">14</div>
<div class="t" style="left:254.25px;top:380.5px;width:17.5px;text-align:center;line-height:17px;padding-top:1px;color:#000">15</div>
<div class="t" style="left:149.25px;top:398.0px;width:17.5px;text-align:center;line-height:17px;padding-top:1px;color:#000">16</div>
<div class="t" style="left:166.75px;top:398.0px;width:17.5px;text-align:center;line-height:17px;padding-top:1px;color:#000">17</div>
<div class="t" style="left:184.25px;top:398.0px;width:17.5px;text-align:center;line-height:17px;padding-top:1px;color:#000">18</div>
<div class="t" style="left:201.75px;top:398.0px;width:17.5px;text-align:center;line-height:17px;padding-top:1px;color:#000">19</div>
<div class="t" style="left:219.25px;top:398.0px;width:17.5px;text-align:center;line-height:17px;padding-top:1px;color:#000">20</div>
<div class="t" style="left:236.75px;top:398.0px;width:17.5px;text-align:center;line-height:17px;padding-top:1px;color:#000">21</div>
<div class="t" style="left:254.25px;top:398.0px;width:17.5px;text-align:center;line-height:17px;padding-top:1px;color:#000">22</div>
<div class="t" style="left:149.25px;top:415.5px;width:17.5px;text-align:center;line-height:17px;padding-top:1px;color:#000">23</div>
<div class="t" style="left:166.75px;top:415.5px;width:17.5px;text-align:center;line-height:17px;padding-top:1px;color:#000">24</div>
<div class="t" style="left:184.25px;top:415.5px;width:17.5px;text-align:center;line-height:17px;padding-top:1px;color:#000">25</div>
<div class="t" style="left:201.75px;top:415.5px;width:17.5px;text-align:center;line-height:17px;padding-top:1px;color:#000">26</div>
<div class="t" style="left:219.25px;top:415.5px;width:17.5px;text-align:center;line-height:17px;padding-top:1px;color:#000">27</div>
<div class="t" style="left:236.75px;top:415.5px;width:17.5px;text-align:center;line-height:17px;padding-top:1px;color:#000">28</div>
<div class="t" style="left:254.25px;top:415.5px;width:17.5px;text-align:center;line-height:17px;padding-top:1px;color:#000">29</div>
<div class="t" style="left:149.25px;top:433.0px;width:17.5px;text-align:center;line-height:17px;padding-top:1px;color:#000">30</div>
<div class="t" style="left:166.75px;top:433.0px;width:17.5px;text-align:center;line-height:17px;padding-top:1px;color:#ACA899">1</div>
<div class="t" style="left:184.25px;top:433.0px;width:17.5px;text-align:center;line-height:17px;padding-top:1px;color:#ACA899">2</div>
<div class="t" style="left:201.75px;top:433.0px;width:17.5px;text-align:center;line-height:17px;padding-top:1px;color:#ACA899">3</div>
<div class="t" style="left:219.25px;top:433.0px;width:17.5px;text-align:center;line-height:17px;padding-top:1px;color:#ACA899">4</div>
<div class="t" style="left:236.75px;top:433.0px;width:17.5px;text-align:center;line-height:17px;padding-top:1px;color:#ACA899">5</div>
<div class="t" style="left:254.25px;top:433.0px;width:17.5px;text-align:center;line-height:17px;padding-top:1px;color:#ACA899">6</div>
<!-- status bar -->
<div class="a" style="left:5px;top:456px;width:653px;height:15px;background:#ECE9D8;border-top:1px solid #F6F4EC"></div>
<div class="t" style="left:10px;top:458px">Tuesday, March 30, 2004 12:46 PM (GMT-5:00) Eastern Time (US &amp; Canada)</div>

<div class="a" style="left:473px;top:146px;width:1px;height:2px;background:#ACA899"></div>
<!-- right strip details -->
<div class="a" style="left:650px;top:146px;width:8px;height:324px;background:#fff"></div>
<div class="a" style="left:656px;top:146px;width:1px;height:324px;background:#F1EFE2"></div>
<div class="a" style="left:650px;top:236px;width:8px;height:15px;background:#ECE9D8"></div>
<div class="a" style="left:650px;top:251px;width:8px;height:1px;background:#ACA899"></div>
<div class="a" style="left:650px;top:344px;width:8px;height:15px;background:#ECE9D8"></div>
<div class="a" style="left:650px;top:359px;width:8px;height:1px;background:#ACA899"></div>
<div class="a" style="left:650px;top:397px;width:8px;height:15px;background:#ECE9D8"></div>
<div class="a" style="left:650px;top:412px;width:8px;height:1px;background:#ACA899"></div>
<div class="a" style="left:650px;top:450px;width:8px;height:21px;background:#ECE9D8"></div>
<div class="a" style="left:650px;top:457px;width:7px;height:1px;background:#fff"></div>

<!-- ============ DIALOG (active) ============ -->
<div class="a" id="dlg" style="left:218px;top:148px;width:432px;height:439px;background:#0831D9;border-radius:7px 7px 0 0;overflow:hidden">
  <div class="a" style="left:0;top:0;width:432px;height:29px;background:linear-gradient(to bottom,#0A3CD0 0 1px,#3A90FF 1px 3px,#1A72F2 3px 4px,#0058E6 4px 8px,#0053DF 8px 15px,#0057E6 15px 18px,#0062F2 18px 21px,#006EF8 21px 27px,#0050DA 27px 28px,#0034B8 28px 29px)"></div>
</div>
<div class="a face" style="left:222px;top:177px;width:424px;height:406px"></div>
<div class="a" style="left:218px;top:154px;width:4px;height:433px;background:linear-gradient(to right,#0019CF 0 1px,#0736E0 1px 2px,#166AEE 2px 3px,#0855DD 3px 4px)"></div>
<div class="a" style="left:646px;top:154px;width:4px;height:433px;background:linear-gradient(to right,#0852F0 0 1px,#0846E0 1px 2px,#0030C8 2px 3px,#000F90 3px 4px)"></div>
<div class="a" style="left:222px;top:583px;width:424px;height:4px;background:linear-gradient(to bottom,#0852F0 0 1px,#0846E0 1px 2px,#0030C8 2px 3px,#000F90 3px 4px)"></div>
<div class="a" style="left:218px;top:583px;width:4px;height:4px;background:linear-gradient(to bottom,#0852F0 0 1px,#0846E0 1px 2px,#0030C8 2px 3px,#000F90 3px 4px)"></div>
<div class="a" style="left:218px;top:583px;width:1px;height:4px;background:#0019CF"></div>
<div class="a" style="left:646px;top:583px;width:4px;height:4px;background:linear-gradient(to bottom,#0852F0 0 1px,#0846E0 1px 2px,#0030C8 2px 3px,#000F90 3px 4px)"></div>
<div class="a" style="left:649px;top:583px;width:1px;height:4px;background:#000F90"></div>
<div class="a" style="left:645px;top:177px;width:1px;height:406px;background:#FFF8E0"></div>
<div class="a" style="left:222px;top:177px;width:424px;height:1px;background:#F8F6EC"></div>
<div class="a" style="left:222px;top:177px;width:1px;height:406px;background:#F8F6EC"></div>
<div class="a" style="left:222px;top:582px;width:424px;height:1px;background:#FFF8E0"></div>

<div class="t b" style="left:243px;top:158px;font-size:13px;line-height:16px;color:#fff;text-shadow:1px 1px 0 #0A2C9C;letter-spacing:0.1px">Kerri - "Theme of nature" : Avalon Academy</div>
<svg class="a" style="left:223px;top:156px" width="18" height="16"><g transform="translate(0.5,0.5) scale(0.52)">
<polygon points="2.5,11.3 19.5,6.2 28.5,18 9.6,27.5 2.5,14" fill="#FFFFFF"/>
<polygon points="2.5,11.3 9.6,26 9.6,28.5 1.5,13" fill="#A0A0B0"/>
<polygon points="9.6,24.8 28.6,17.4 28.6,22.2 10.3,28.8" fill="#6E58D8"/>
<polygon points="10.3,27 28.6,20.5 28.6,22.2 10.3,28.8" fill="#4830A8"/>
<polygon points="0.1,5.9 18.4,2.1 19.5,6.2 2.5,11.3" fill="#F59A10"/>
<polygon points="7,4.5 18.4,2.1 19.2,5 8,7.5" fill="#FFCC10"/>
<rect x="6.5" y="13" width="2" height="2" fill="#7070D0"/><rect x="8.5" y="18" width="2" height="2" fill="#7070D0"/><rect x="10.5" y="22" width="2" height="2" fill="#7070D0"/>
<path d="M11 11 Q13 9.5 15 10.5 Q17 9 19 9.5" stroke="#8080D0" stroke-width="0.9" fill="none"/>
<path d="M13 15.5 Q16 13.5 19 14.5" stroke="#8080D0" stroke-width="0.9" fill="none"/>
<path d="M16.5 16.5 L29.5 3.8" stroke="#585858" stroke-width="3.6"/>
<path d="M16.2 16 L29 3.5" stroke="#C8C8C8" stroke-width="1.5"/>
<path d="M15 15 L28 2.5" stroke="#E8B878" stroke-width="0.9"/>
<path d="M14.8 19.2 L17 17" stroke="#000" stroke-width="2.4"/>
</g></svg>
<div class="a" style="left:577px;top:154px;width:21px;height:21px;border-radius:3px;border:1px solid #fff;background:linear-gradient(135deg,#78A8F8 0%,#3C7CF0 35%,#1E5AE0 100%)"></div><div class="a" style="left:583px;top:167px;width:7px;height:3px;background:#fff"></div>
<div class="a" style="left:600px;top:154px;width:21px;height:21px;border-radius:3px;border:1px solid #fff;background:linear-gradient(135deg,#78A8F8 0%,#3C7CF0 35%,#1E5AE0 100%)"></div><div class="a" style="left:605px;top:159px;width:11px;height:11px;border:1px solid #fff;border-top:3px solid #fff"></div>
<div class="a" style="left:623px;top:154px;width:21px;height:21px;border-radius:3px;border:1px solid #fff;background:linear-gradient(135deg,#F0A080 0%,#E35A30 35%,#D0401C 100%)"></div><svg class="a" style="left:623px;top:154px" width="21" height="21"><path d="M6 6 L15 15 M15 6 L6 15" stroke="#fff" stroke-width="2.2" stroke-linecap="square"/></svg>
<div class="t" style="left:227px;top:181px">File</div>
<div class="t" style="left:255px;top:181px">Edit</div>
<div class="t" style="left:285px;top:181px">Format</div>
<div class="t" style="left:331px;top:181px">Message</div>
<div class="t" style="left:385px;top:181px">Collaborate</div>
<div class="t" style="left:453px;top:181px">View</div>
<div class="t" style="left:487px;top:181px">Admin</div>
<div class="t" style="left:527px;top:181px">Help</div>
<div class="a" style="left:222px;top:197px;width:424px;height:1px;background:#ACA899"></div>
<div class="a" style="left:222px;top:198px;width:424px;height:1px;background:#fff"></div>
<div id="dlgtb"><svg class="a" style="left:0;top:0" width="663" height="588"><rect x="224" y="200" width="2" height="23" fill="#fff"/><rect x="226" y="200" width="1" height="24" fill="#ACA899"/><rect x="224" y="223" width="3" height="1" fill="#ACA899"/><rect x="228" y="200" width="2" height="23" fill="#fff"/><rect x="230" y="200" width="1" height="24" fill="#ACA899"/><rect x="228" y="223" width="3" height="1" fill="#ACA899"/><rect x="308" y="200" width="1" height="23" fill="#ACA899"/><rect x="309" y="200" width="1" height="23" fill="#fff"/><rect x="389" y="200" width="1" height="23" fill="#ACA899"/><rect x="390" y="200" width="1" height="23" fill="#fff"/><rect x="494" y="200" width="1" height="23" fill="#ACA899"/><rect x="495" y="200" width="1" height="23" fill="#fff"/><rect x="239" y="211" width="13" height="9" fill="#A0A0A0"/><rect x="238" y="210" width="13" height="9" fill="#000"/><rect x="239" y="211" width="11" height="7" fill="#E8E8E8"/><rect x="241" y="214" width="5" height="1" fill="#808080"/><rect x="241" y="216" width="6" height="1" fill="#808080"/><rect x="248" y="211" width="2" height="2" fill="#E00000"/><path d="M247.5 203 V206 M252 203 L249 206 M248.5 207.5 H252.5" stroke="#000" stroke-width="1" fill="none"/><circle cx="268" cy="213" r="5.3" fill="#F0F4FF" stroke="#1030E0" stroke-width="1.6" stroke-dasharray="2.2 0.8"/><path d="M267 210 L268 213.5 L270 215" stroke="#E01010" stroke-width="1.2" fill="none"/><path d="M271.5 203 V206 M276 203 L273 206 M272.5 207.5 H276.5" stroke="#000" stroke-width="1" fill="none"/><rect x="286" y="209" width="9" height="9" fill="#808080"/><rect x="285" y="208" width="9" height="9" fill="#000"/><rect x="286" y="209" width="7" height="7" fill="#fff"/><rect x="286" y="209" width="7" height="1" fill="#F09020"/><rect x="287" y="211" width="4" height="1" fill="#5070E0"/><rect x="287" y="213" width="4" height="1" fill="#5070E0"/><path d="M297 207 L290 214.5" stroke="#E00030" stroke-width="1.3"/><path d="M295.5 203 V206 M300 203 L297 206 M296.5 207.5 H300.5" stroke="#000" stroke-width="1" fill="none"/><g shape-rendering="crispEdges"><rect x="327" y="204" width="5" height="2" fill="#0000E0"/><rect x="331" y="203" width="1" height="4" fill="#0000E0"/><rect x="332" y="204" width="1" height="2" fill="#0000E0"/><rect x="326" y="205" width="1" height="2" fill="#0000E0"/><rect x="319" y="207" width="8" height="1" fill="#0A4A80"/><rect x="318" y="208" width="10" height="1" fill="#1A5AA0"/><rect x="318" y="209" width="10" height="6" fill="#2A30C8"/><rect x="319" y="209" width="8" height="6" fill="#F09010"/><rect x="320" y="209" width="6" height="2" fill="#FFFFFF"/><rect x="320" y="213" width="6" height="1" fill="#FFE0A0"/><rect x="321" y="211" width="1" height="2" fill="#000"/><rect x="324" y="211" width="1" height="2" fill="#000"/><rect x="317" y="211" width="1" height="2" fill="#000"/><rect x="328" y="211" width="1" height="2" fill="#000"/><rect x="319" y="215" width="8" height="1" fill="#2A30C8"/><rect x="321" y="216" width="4" height="1" fill="#2A30C8"/><rect x="319" y="217" width="8" height="1" fill="#2A30C8"/></g><g shape-rendering="crispEdges"><rect x="345" y="206" width="6" height="2" fill="#0000E0"/><rect x="345" y="208" width="1" height="3" fill="#000"/><rect x="346" y="208" width="4" height="3" fill="#F8C8A0"/><rect x="350" y="208" width="1" height="6" fill="#000"/><rect x="346" y="211" width="2" height="1" fill="#000"/><rect x="348" y="211" width="2" height="3" fill="#F8C8A0"/><rect x="347" y="212" width="1" height="1" fill="#000"/><rect x="348" y="214" width="2" height="1" fill="#000"/><rect x="349" y="213" width="1" height="1" fill="#F8C8A0"/><rect x="344" y="216" width="11" height="1" fill="#000"/><rect x="343" y="217" width="13" height="1" fill="#000"/><rect x="342" y="218" width="15" height="1" fill="#000"/><rect x="344" y="217" width="4" height="1" fill="#F0F000"/><rect x="350" y="217" width="4" height="1" fill="#F0F000"/><rect x="349" y="216" width="1" height="2" fill="#F8F8F0"/></g><g shape-rendering="crispEdges"><rect x="366" y="206" width="10" height="12" fill="#909090"/><rect x="366" y="205" width="9" height="1" fill="#000"/><rect x="365" y="206" width="1" height="1" fill="#000"/><rect x="364" y="207" width="1" height="10" fill="#000"/><rect x="364" y="216" width="11" height="1" fill="#000"/><rect x="374" y="205" width="1" height="12" fill="#000"/><rect x="366" y="206" width="8" height="10" fill="#fff"/><rect x="365" y="207" width="1" height="9" fill="#fff"/><rect x="366" y="209" width="13" height="1" fill="#0010E0"/><rect x="365" y="210" width="1" height="3" fill="#0010E0"/><rect x="366" y="213" width="13" height="1" fill="#0010E0"/><rect x="379" y="210" width="1" height="3" fill="#0010E0"/><rect x="367" y="211" width="5" height="1" fill="#0010E0"/><rect x="372" y="210" width="1" height="1" fill="#0010E0"/><rect x="367" y="210" width="1" height="1" fill="#0010E0"/></g><rect x="397" y="203" width="12" height="1.2" fill="#1030E0"/><rect x="397" y="206" width="12" height="1.2" fill="#1030E0"/><rect x="397" y="209" width="5" height="1.2" fill="#1030E0"/><rect x="397" y="203" width="1.2" height="10" fill="#1030E0"/><path d="M410.5 203 V210" stroke="#1030E0" stroke-dasharray="1 1"/><rect x="403" y="211" width="10" height="8" fill="#A0A0A0"/><rect x="402" y="210" width="10" height="8" fill="#000"/><rect x="403" y="211" width="8" height="6" fill="#E8E8E8"/><rect x="404" y="214" width="4" height="1" fill="#808080"/><rect x="409" y="211" width="2" height="2" fill="#E00000"/><g shape-rendering="crispEdges"><rect x="424" y="203" width="11" height="1" fill="#000"/><rect x="424" y="204" width="1" height="9" fill="#000"/><rect x="435" y="205" width="1" height="8" fill="#000"/><rect x="434" y="204" width="1" height="1" fill="#000"/><rect x="425" y="204" width="9" height="9" fill="#F8D0A8"/><rect x="434" y="205" width="1" height="8" fill="#F8D0A8"/><rect x="433" y="204" width="1" height="1" fill="#F8E8D8"/><rect x="428" y="207" width="2" height="1" fill="#000"/><rect x="432" y="207" width="1" height="1" fill="#000"/><rect x="427" y="209" width="2" height="1" fill="#000"/><rect x="430" y="209" width="1" height="1" fill="#000"/><rect x="432" y="209" width="1" height="1" fill="#000"/><rect x="422" y="213" width="16" height="6" fill="#000"/><rect x="421" y="213" width="1" height="1" fill="#000"/><rect x="438" y="213" width="1" height="1" fill="#000"/><rect x="421" y="215" width="1" height="1" fill="#000"/><rect x="438" y="215" width="1" height="1" fill="#000"/><rect x="424" y="214" width="9" height="2" fill="#E0E0E0"/><rect x="425" y="214" width="1" height="1" fill="#000"/><rect x="427" y="214" width="1" height="1" fill="#000"/><rect x="429" y="214" width="1" height="1" fill="#000"/><rect x="431" y="214" width="1" height="1" fill="#000"/><rect x="433" y="215" width="2" height="1" fill="#0000E0"/></g><path d="M453 211 L448 216.5" stroke="#000" stroke-width="3"/><path d="M453 211 L448 216.5" stroke="#F0A030" stroke-width="1.5"/><circle cx="456.5" cy="207.5" r="4.3" fill="#C8E8F8" stroke="#000" stroke-width="1.1"/><circle cx="455.5" cy="206.5" r="1.5" fill="#fff"/><g shape-rendering="crispEdges"><rect x="471" y="212" width="15" height="5" fill="#808090"/><rect x="472" y="205" width="4" height="1" fill="#000"/><rect x="471" y="206" width="1" height="1" fill="#000"/><rect x="476" y="206" width="1" height="1" fill="#000"/><rect x="477" y="207" width="7" height="1" fill="#000"/><rect x="470" y="207" width="1" height="9" fill="#000"/><rect x="470" y="215" width="14" height="1" fill="#000"/><rect x="483" y="207" width="1" height="9" fill="#000"/><rect x="471" y="207" width="6" height="8" fill="#fff"/><rect x="477" y="208" width="6" height="7" fill="#fff"/><rect x="472" y="206" width="4" height="1" fill="#fff"/><rect x="471" y="207" width="1" height="8" fill="#F0F000"/><rect x="471" y="213" width="12" height="2" fill="#F0F000"/><rect x="474" y="208" width="1" height="4" fill="#000"/><rect x="473" y="209" width="3" height="1" fill="#000"/><rect x="475" y="211" width="6" height="1" fill="#000"/><rect x="476" y="209" width="6" height="1" fill="#E0E0F0"/></g><g shape-rendering="crispEdges"><rect x="503" y="206" width="6" height="2" fill="#000"/><rect x="505" y="204" width="2" height="6" fill="#000"/><rect x="512" y="205" width="3" height="1" fill="#A0A0B0"/><rect x="511" y="206" width="1" height="1" fill="#A0A0B0"/><rect x="511" y="207" width="1" height="2" fill="#A0A0B0"/><rect x="513" y="206" width="2" height="1" fill="#A0A0B0"/><rect x="513" y="207" width="1" height="2" fill="#A0A0B0"/><rect x="517" y="208" width="1" height="1" fill="#000"/><rect x="516" y="209" width="3" height="3" fill="#000"/><rect x="516" y="212" width="2" height="2" fill="#000"/><rect x="515" y="214" width="2" height="1" fill="#000"/><rect x="514" y="215" width="2" height="1" fill="#000"/><rect x="510" y="216" width="5" height="1" fill="#000"/><rect x="509" y="215" width="3" height="1" fill="#000"/><rect x="508" y="216" width="2" height="2" fill="#000"/><rect x="509" y="218" width="3" height="1" fill="#000"/><rect x="510" y="217" width="4" height="1" fill="#000"/></g><rect x="530" y="207" width="11" height="1.8" fill="#000"/><rect x="533.5" y="205.5" width="4" height="1.5" fill="#000"/><path d="M531.5 209 V218 H539.5 V209" stroke="#000" stroke-width="1.2" fill="#fff"/><path d="M533.5 210 V217 M535.5 210 V217 M537.5 210 V217" stroke="#000" stroke-width="0.9"/></svg></div>
<div class="a" style="left:222px;top:225px;width:424px;height:1px;background:#ACA899"></div>
<div class="a" style="left:222px;top:226px;width:424px;height:1px;background:#fff"></div>
<div class="a" style="left:232px;top:252px;width:401px;height:309px;border-left:1px solid #fff;border-top:1px solid #fff;border-right:1px solid #000;border-bottom:1px solid #000;box-shadow:inset -1px -1px 0 #ACA899"></div>
<div class="a" style="left:269px;top:236px;width:59px;height:16px;border-top:1px solid #fff;border-right:1px solid #000;box-shadow:inset -1px 0 0 #ACA899;border-radius:0 2px 0 0"></div>
<div class="t" style="left:271px;top:238px">Reminders</div>
<div class="a face" style="left:232px;top:233px;width:37px;height:21px;border-left:1px solid #fff;border-top:1px solid #fff;border-right:1px solid #000;box-shadow:inset -1px 0 0 #ACA899;border-radius:2px 2px 0 0"></div>
<div class="t" style="left:239px;top:236px">Task</div>
<div class="a" style="left:249px;top:264px;width:29px;height:28px;border:1px dotted #000"></div><svg class="a" style="left:248px;top:263px" width="31" height="30"><g transform="translate(0,0) scale(1)">
<polygon points="2.5,11.3 19.5,6.2 28.5,18 9.6,27.5 2.5,14" fill="#FFFFFF"/>
<polygon points="2.5,11.3 9.6,26 9.6,28.5 1.5,13" fill="#A0A0B0"/>
<polygon points="9.6,24.8 28.6,17.4 28.6,22.2 10.3,28.8" fill="#6E58D8"/>
<polygon points="10.3,27 28.6,20.5 28.6,22.2 10.3,28.8" fill="#4830A8"/>
<polygon points="0.1,5.9 18.4,2.1 19.5,6.2 2.5,11.3" fill="#F59A10"/>
<polygon points="7,4.5 18.4,2.1 19.2,5 8,7.5" fill="#FFCC10"/>
<rect x="6.5" y="13" width="2" height="2" fill="#7070D0"/><rect x="8.5" y="18" width="2" height="2" fill="#7070D0"/><rect x="10.5" y="22" width="2" height="2" fill="#7070D0"/>
<path d="M11 11 Q13 9.5 15 10.5 Q17 9 19 9.5" stroke="#8080D0" stroke-width="0.9" fill="none"/>
<path d="M13 15.5 Q16 13.5 19 14.5" stroke="#8080D0" stroke-width="0.9" fill="none"/>
<path d="M16.5 16.5 L29.5 3.8" stroke="#585858" stroke-width="3.6"/>
<path d="M16.2 16 L29 3.5" stroke="#C8C8C8" stroke-width="1.5"/>
<path d="M15 15 L28 2.5" stroke="#E8B878" stroke-width="0.9"/>
<path d="M14.8 19.2 L17 17" stroke="#000" stroke-width="2.4"/>
</g></svg>
<div class="t" style="left:249px;top:300px">From:</div>
<div class="t" style="left:249px;top:321px">Description:</div>
<div class="t" style="left:249px;top:342px">Starts at:</div>
<div class="t" style="left:249px;top:365px">Due at:</div>
<div class="t" style="left:249px;top:388px">Time zone:</div>
<div class="t" style="left:249px;top:418px">Color:</div>
<div class="t" style="left:249px;top:441px">Category:</div>
<div class="t" style="left:249px;top:464px">Sensitivity:</div>
<div class="t" style="left:249px;top:487px">Priority:</div>
<div class="t" style="left:249px;top:510px">Task state:</div>
<div class="t" style="left:249px;top:533px;letter-spacing:-0.35px">Completed on:</div>
<svg class="a" style="left:332px;top:301px" width="7" height="12" shape-rendering="crispEdges"><rect x="2" y="1" width="2" height="2" fill="#2020B0"/><rect x="1" y="4" width="4" height="4" fill="#2828C0"/><rect x="2" y="5" width="2" height="2" fill="#C8D0FF"/><rect x="2" y="8" width="2" height="3" fill="#2020B0"/></svg>
<div class="t" style="left:344px;top:301px">Barry Blake</div>
<div class="a" style="left:325px;top:319px;width:255px;height:17px;background:#fff;border-top:1px solid #ACA899;border-left:1px solid #ACA899;border-right:1px solid #fff;border-bottom:1px solid #fff;box-shadow:inset 1px 1px 0 #9A9784,inset -1px -1px 0 #F1EFE2"></div><div class="a" style="left:327px;top:321px;width:251px;height:13px;overflow:hidden"><div class="t" style="left:0px;top:0px">Kerri - "Theme of nature"</div></div>
<div class="a" style="left:325px;top:340px;width:255px;height:17px;background:#fff;border-top:1px solid #ACA899;border-left:1px solid #ACA899;border-right:1px solid #fff;border-bottom:1px solid #fff;box-shadow:inset 1px 1px 0 #9A9784,inset -1px -1px 0 #F1EFE2"></div><div class="a" style="left:327px;top:342px;width:238px;height:13px;overflow:hidden"><div class="t" style="left:0px;top:0px">Friday, October 17, 2003 9:00 AM</div></div><div class="a face" style="left:565px;top:342px;width:13px;height:13px;border-top:1px solid #fff;border-left:1px solid #fff;border-right:1px solid #000;border-bottom:1px solid #000;box-shadow:inset -1px -1px 0 #ACA899"></div><svg class="a" style="left:568px;top:346px" width="7" height="4"><path d="M0 0 H7 L3.5 4 Z" fill="#000"/></svg>
<div class="a" style="left:325px;top:363px;width:255px;height:17px;background:#fff;border-top:1px solid #ACA899;border-left:1px solid #ACA899;border-right:1px solid #fff;border-bottom:1px solid #fff;box-shadow:inset 1px 1px 0 #9A9784,inset -1px -1px 0 #F1EFE2"></div><div class="a" style="left:327px;top:365px;width:238px;height:13px;overflow:hidden"><div class="t" style="left:0px;top:0px">Monday, October 27, 2003 12:00 AM</div></div><div class="a face" style="left:565px;top:365px;width:13px;height:13px;border-top:1px solid #fff;border-left:1px solid #fff;border-right:1px solid #000;border-bottom:1px solid #000;box-shadow:inset -1px -1px 0 #ACA899"></div><svg class="a" style="left:568px;top:369px" width="7" height="4"><path d="M0 0 H7 L3.5 4 Z" fill="#000"/></svg>
<div class="a" style="left:325px;top:386px;width:255px;height:17px;background:#fff;border-top:1px solid #ACA899;border-left:1px solid #ACA899;border-right:1px solid #fff;border-bottom:1px solid #fff;box-shadow:inset 1px 1px 0 #9A9784,inset -1px -1px 0 #F1EFE2"></div><div class="a" style="left:327px;top:388px;width:238px;height:13px;overflow:hidden"><div class="t" style="left:0px;top:0px">(GMT-5:00) Eastern Time (US &amp; Canada)</div></div><div class="a face" style="left:565px;top:388px;width:13px;height:13px;border-top:1px solid #fff;border-left:1px solid #fff;border-right:1px solid #000;border-bottom:1px solid #000;box-shadow:inset -1px -1px 0 #ACA899"></div><svg class="a" style="left:568px;top:392px" width="7" height="4"><path d="M0 0 H7 L3.5 4 Z" fill="#000"/></svg>
<div class="a" style="left:247px;top:409px;width:373px;height:1px;background:#000"></div>
<div class="a" style="left:325px;top:416px;width:32px;height:17px;background:#fff;border-top:1px solid #ACA899;border-left:1px solid #ACA899;border-right:1px solid #fff;border-bottom:1px solid #fff;box-shadow:inset 1px 1px 0 #9A9784,inset -1px -1px 0 #F1EFE2"></div><div class="a face" style="left:342px;top:418px;width:13px;height:13px;border-top:1px solid #fff;border-left:1px solid #fff;border-right:1px solid #000;border-bottom:1px solid #000;box-shadow:inset -1px -1px 0 #ACA899"></div><svg class="a" style="left:345px;top:422px" width="7" height="4"><path d="M0 0 H7 L3.5 4 Z" fill="#000"/></svg>
<div class="a" style="left:327px;top:418px;width:15px;height:13px;background:#FFCCF8"></div>
<div class="a" style="left:325px;top:439px;width:143px;height:17px;background:#fff;border-top:1px solid #ACA899;border-left:1px solid #ACA899;border-right:1px solid #fff;border-bottom:1px solid #fff;box-shadow:inset 1px 1px 0 #9A9784,inset -1px -1px 0 #F1EFE2"></div><div class="a" style="left:327px;top:441px;width:126px;height:13px;overflow:hidden"><div class="t" style="left:0px;top:0px">Projects</div></div><div class="a face" style="left:453px;top:441px;width:13px;height:13px;border-top:1px solid #fff;border-left:1px solid #fff;border-right:1px solid #000;border-bottom:1px solid #000;box-shadow:inset -1px -1px 0 #ACA899"></div><svg class="a" style="left:456px;top:445px" width="7" height="4"><path d="M0 0 H7 L3.5 4 Z" fill="#000"/></svg>
<div class="a" style="left:325px;top:462px;width:143px;height:17px;background:#fff;border-top:1px solid #ACA899;border-left:1px solid #ACA899;border-right:1px solid #fff;border-bottom:1px solid #fff;box-shadow:inset 1px 1px 0 #9A9784,inset -1px -1px 0 #F1EFE2"></div><div class="a" style="left:327px;top:464px;width:126px;height:13px;overflow:hidden"><div class="t" style="left:0px;top:0px">Normal</div></div><div class="a face" style="left:453px;top:464px;width:13px;height:13px;border-top:1px solid #fff;border-left:1px solid #fff;border-right:1px solid #000;border-bottom:1px solid #000;box-shadow:inset -1px -1px 0 #ACA899"></div><svg class="a" style="left:456px;top:468px" width="7" height="4"><path d="M0 0 H7 L3.5 4 Z" fill="#000"/></svg>
<div class="a" style="left:325px;top:485px;width:143px;height:17px;background:#fff;border-top:1px solid #ACA899;border-left:1px solid #ACA899;border-right:1px solid #fff;border-bottom:1px solid #fff;box-shadow:inset 1px 1px 0 #9A9784,inset -1px -1px 0 #F1EFE2"></div><div class="a" style="left:327px;top:487px;width:126px;height:13px;overflow:hidden"><div class="t" style="left:0px;top:0px">Normal</div></div><div class="a face" style="left:453px;top:487px;width:13px;height:13px;border-top:1px solid #fff;border-left:1px solid #fff;border-right:1px solid #000;border-bottom:1px solid #000;box-shadow:inset -1px -1px 0 #ACA899"></div><svg class="a" style="left:456px;top:491px" width="7" height="4"><path d="M0 0 H7 L3.5 4 Z" fill="#000"/></svg>
<div class="a" style="left:325px;top:508px;width:143px;height:17px;background:#fff;border-top:1px solid #ACA899;border-left:1px solid #ACA899;border-right:1px solid #fff;border-bottom:1px solid #fff;box-shadow:inset 1px 1px 0 #9A9784,inset -1px -1px 0 #F1EFE2"></div><div class="a" style="left:327px;top:510px;width:126px;height:13px;overflow:hidden"><div class="t" style="left:0px;top:0px;letter-spacing:-0.25px">Waiting on Someone Else</div></div><div class="a face" style="left:453px;top:510px;width:13px;height:13px;border-top:1px solid #fff;border-left:1px solid #fff;border-right:1px solid #000;border-bottom:1px solid #000;box-shadow:inset -1px -1px 0 #ACA899"></div><svg class="a" style="left:456px;top:514px" width="7" height="4"><path d="M0 0 H7 L3.5 4 Z" fill="#000"/></svg>
<div class="a" style="left:325px;top:531px;width:143px;height:17px;background:#fff;border-top:1px solid #ACA899;border-left:1px solid #ACA899;border-right:1px solid #fff;border-bottom:1px solid #fff;box-shadow:inset 1px 1px 0 #9A9784,inset -1px -1px 0 #F1EFE2"></div><div class="a" style="left:327px;top:533px;width:126px;height:13px;overflow:hidden"><div class="t" style="left:0px;top:0px">Not Yet Complete</div></div><div class="a face" style="left:453px;top:533px;width:13px;height:13px;border-top:1px solid #fff;border-left:1px solid #fff;border-right:1px solid #000;border-bottom:1px solid #000;box-shadow:inset -1px -1px 0 #ACA899"></div><svg class="a" style="left:456px;top:537px" width="7" height="4"><path d="M0 0 H7 L3.5 4 Z" fill="#000"/></svg>
<div class="a" style="left:222px;top:561px;width:424px;height:1px;background:#FAF8F0"></div>
<div class="a" style="left:222px;top:564px;width:424px;height:1px;background:#ACA899"></div>
<div class="a" style="left:222px;top:565px;width:424px;height:1px;background:#fff"></div>
<div class="a" style="left:225px;top:567px;width:63px;height:15px;background:#fff;border-top:1px solid #ACA899;border-left:1px solid #ACA899"></div><div class="t" style="left:228px;top:569px">100%</div><div class="a face" style="left:261px;top:569px;width:13px;height:13px;border-top:1px solid #fff;border-left:1px solid #fff;border-right:1px solid #000;border-bottom:1px solid #000;box-shadow:inset -1px -1px 0 #ACA899"></div><svg class="a" style="left:264px;top:573px" width="7" height="4"><path d="M0 0 H7 L3.5 4 Z" fill="#000"/></svg><div class="a face" style="left:274px;top:569px;width:13px;height:13px;border-top:1px solid #fff;border-left:1px solid #fff;border-right:1px solid #000;border-bottom:1px solid #000;box-shadow:inset -1px -1px 0 #ACA899"></div><svg class="a" style="left:277px;top:571px" width="7" height="9"><path d="M0 3.5 H7 L3.5 0 Z M0 5 H7 L3.5 8.5 Z" fill="#000"/></svg><div class="a" style="left:292px;top:567px;width:1px;height:15px;background:#ACA899"></div><div class="a" style="left:293px;top:567px;width:1px;height:15px;background:#fff"></div>
</body></html>
